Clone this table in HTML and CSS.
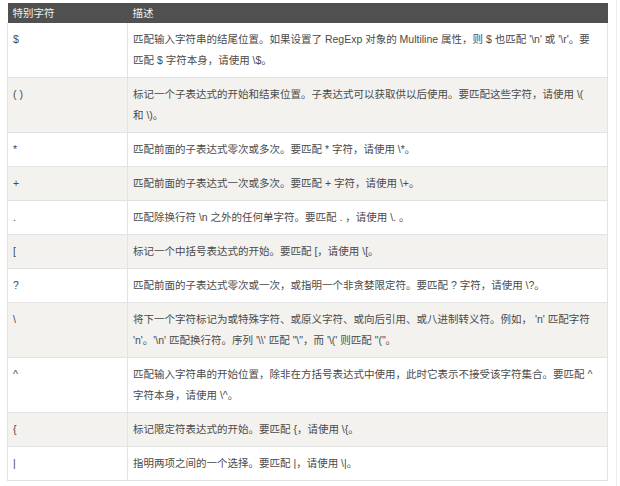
FILE: index.html
```html
<!DOCTYPE html>
<html lang="zh">
<head>
<meta charset="utf-8">
<link rel="stylesheet" href="styles.css">
</head>
<body>
<div class="page">
  <table class="regex">
    <thead>
      <tr><th class="c1">特别字符</th><th>描述</th></tr>
    </thead>
    <tbody>
      <tr><td class="c1">$</td><td>匹配输入字符串的结尾位置。如果设置了 RegExp 对象的 Multiline 属性，则 $ 也匹配 '\n' 或 '\r'。要<br>匹配 $ 字符本身，请使用 \$。</td></tr>
      <tr><td class="c1">( )</td><td>标记一个子表达式的开始和结束位置。子表达式可以获取供以后使用。要匹配这些字符，请使用 \(<br>和 \)。</td></tr>
      <tr><td class="c1">*</td><td>匹配前面的子表达式零次或多次。要匹配 * 字符，请使用 \*。</td></tr>
      <tr><td class="c1">+</td><td>匹配前面的子表达式一次或多次。要匹配 + 字符，请使用 \+。</td></tr>
      <tr><td class="c1">.</td><td>匹配除换行符 \n 之外的任何单字符。要匹配 . ，请使用 \. 。</td></tr>
      <tr><td class="c1">[</td><td>标记一个中括号表达式的开始。要匹配 [，请使用 \[。</td></tr>
      <tr><td class="c1">?</td><td>匹配前面的子表达式零次或一次，或指明一个非贪婪限定符。要匹配 ? 字符，请使用 \?。</td></tr>
      <tr><td class="c1">\</td><td>将下一个字符标记为或特殊字符、或原义字符、或向后引用、或八进制转义符。例如， 'n' 匹配字符<br>'n'。'\n' 匹配换行符。序列 '\\' 匹配 "\"，而 '\(' 则匹配 "("。</td></tr>
      <tr><td class="c1">^</td><td>匹配输入字符串的开始位置，除非在方括号表达式中使用，此时它表示不接受该字符集合。要匹配 ^<br>字符本身，请使用 \^。</td></tr>
      <tr><td class="c1">{</td><td>标记限定符表达式的开始。要匹配 {，请使用 \{。</td></tr>
      <tr><td class="c1">|</td><td>指明两项之间的一个选择。要匹配 |，请使用 \|。</td></tr>
    </tbody>
  </table>
  <div class="rule"></div>
</div>
</body>
</html>
```
FILE: styles.css
```css
html, body {
  margin: 0;
  padding: 0;
  background: #fff;
}
.page {
  width: 617px;
  height: 486px;
  border-right: 1px solid #ececec;
  padding-top: 3px;
  box-sizing: border-box;
  font-family: "Liberation Sans", "Noto Sans CJK SC", sans-serif;
  font-size: 10.5px;
  color: #4a4a4a;
}
.regex {
  margin-left: 7px;
  width: 601px;
  border-collapse: collapse;
  table-layout: fixed;
}
.regex th {
  background: #505050;
  color: #f0f0f0;
  font-weight: normal;
  text-align: left;
  height: 20px;
  padding: 0 5px;
  line-height: 20px;
  white-space: nowrap;
}
.regex td {
  padding: 6px 5px 6px 5px;
  line-height: 21px;
  vertical-align: top;
  white-space: nowrap;
  border: 1px solid #e3e3e3;
  border-top: none;
}
.regex .c1 {
  width: 110px;
}
.regex tbody tr:nth-child(even) td {
  background: #f3f2ef;
}
.rule {
  margin-top: 5px;
  width: 608px;
  height: 1px;
  background: #e6e6e6;
}
```
